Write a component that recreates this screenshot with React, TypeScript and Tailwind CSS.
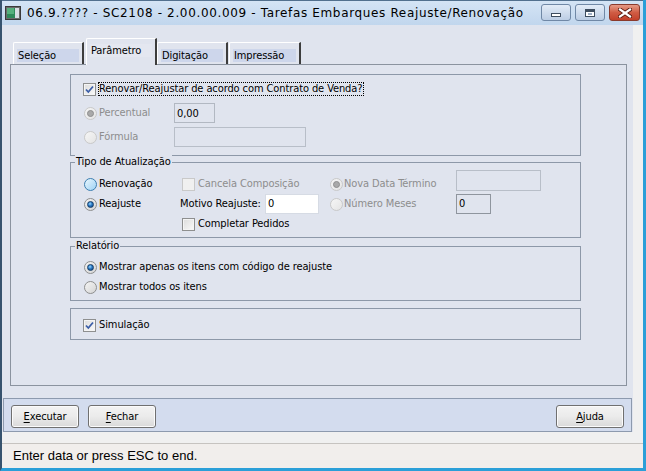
import clsx from 'clsx';

const disabledText = 'text-[#8d8d8d]';

function Radio({ checked = false, disabled = false, hot = false }: { checked?: boolean; disabled?: boolean; hot?: boolean }) {
  return (
    <span
      className={clsx(
        'inline-flex w-[13px] h-[13px] shrink-0 items-center justify-center rounded-full border',
        disabled
          ? 'border-[#c9c9c9] bg-linear-to-br from-[#f6f6f6] to-[#e4e4e4]'
          : hot
            ? 'border-[#3c7fb1] bg-linear-to-br from-[#e8f6fd] to-[#9fd3f4]'
            : 'border-[#8e8f8f] bg-linear-to-br from-[#f4f4f4] to-[#d5d5d5]'
      )}
    >
      {checked && (
        <span
          className={clsx(
            'w-[7px] h-[7px] rounded-full',
            disabled
              ? 'bg-[#a9a9a9] border border-[#8e8e8e]'
              : 'bg-[radial-gradient(circle_at_40%_35%,#9ad9ff_0%,#2a79c4_45%,#0d3f7a_100%)] border border-[#163e6a]'
          )}
        />
      )}
    </span>
  );
}

function Check({ checked = false, disabled = false }: { checked?: boolean; disabled?: boolean }) {
  return (
    <span
      className={clsx(
        'inline-flex w-[13px] h-[13px] shrink-0 items-center justify-center border',
        disabled
          ? 'border-[#c9c9c9] bg-[#f0f0f0]'
          : 'border-[#8e8f8f] bg-linear-to-br from-[#dcdcdc] to-[#fafafa] shadow-[inset_0_0_0_1px_#f4f4f4]'
      )}
    >
      {checked && (
        <svg width="9" height="9" viewBox="0 0 9 9">
          <path d="M1 4.5 L3.3 7 L8 1.5" fill="none" stroke="#3b5ea8" strokeWidth="1.8" />
        </svg>
      )}
    </span>
  );
}

function Field({ value = '', className }: { value?: string; className: string }) {
  return (
    <div className={clsx('flex items-center pl-[2px] border leading-none', className)}>{value}</div>
  );
}

function Group({ title, className, children }: { title?: string; className?: string; children: React.ReactNode }) {
  return (
    <div className={clsx('relative w-[511px] border border-[#8d98a8]', className)}>
      {title && (
        <span className="absolute left-[4px] -top-[8px] px-[1px] bg-[#e0e4ee] leading-[14px]">{title}</span>
      )}
      {children}
    </div>
  );
}

function Tab({ label, active = false, className }: { label: string; active?: boolean; className?: string }) {
  return (
    <div
      className={clsx(
        'w-[71px] border-t border-l border-t-white border-l-white border-r-2 border-r-[#3d3d3d] bg-[#e0e4ee] rounded-tl-[2px]',
        active ? 'relative z-10 h-[27px] -mb-[1px] pt-[5px]' : 'h-[22px] pt-[6px]',
        className
      )}
    >
      <div
        className={clsx(
          'mx-[3px] h-[13px] leading-[13px] pl-[1px]',
          active ? 'bg-[#e4e7f0]' : 'bg-[#cdd6eb]'
        )}
      >
        {label}
      </div>
    </div>
  );
}

function Btn({ k, rest, className }: { k: string; rest: string; className?: string }) {
  return (
    <button
      className={clsx(
        'w-[68px] h-[23px] rounded-[3px] border border-[#707070] bg-linear-to-b from-[#f3f3f3] via-[#ebebeb] to-[#d9d9d9] shadow-[inset_0_0_0_1px_#fbfbfb] text-black leading-none',
        className
      )}
    >
      <span className="underline underline-offset-2">{k}</span>
      {rest}
    </button>
  );
}

export default function App() {
  return (
    <div className="w-[646px] h-[471px] flex flex-col bg-[#e0e4ee] border-l-2 border-r-[3px] border-b-[3px] border-l-[#37536e] border-r-[#2b9fd8] border-b-[#2b9fd8] text-[11px] tracking-[-0.1px] text-black font-['DejaVu_Sans_Condensed','DejaVu_Sans',sans-serif] overflow-hidden">
      {/* Title bar */}
      <div className="h-[25px] shrink-0 flex items-center bg-linear-to-b from-[#d4e4f5] to-[#c1d6ed] border-t border-t-[#52708e]">
        <svg width="16" height="14" viewBox="0 0 16 14" className="ml-[3px]">
          <rect x="0.5" y="0.5" width="15" height="13" fill="#6b6b6b" stroke="#3a3a3a" />
          <rect x="2" y="2" width="12" height="10" fill="#2f8a5a" />
          <rect x="2" y="2" width="7" height="6" fill="#55b07c" />
          <rect x="10" y="2" width="4" height="10" fill="#d8dde3" />
        </svg>
        <span className="ml-[6px] text-[12px] tracking-[0.65px] font-['DejaVu_Sans',sans-serif]">06.9.???? - SC2108 - 2.00.00.009 - Tarefas Embarques Reajuste/Renovação</span>
        <div className="ml-auto mr-[3px] flex items-start gap-[4px] self-start mt-[3px]">
          <div className="w-[30px] h-[17px] rounded-[3px] border border-[#7088a6] bg-linear-to-b from-[#e3ecf7] to-[#bccde4] flex items-end justify-center pb-[3px]">
            <span className="w-[10px] h-[4px] bg-white border border-[#3e4d5f]" />
          </div>
          <div className="w-[30px] h-[17px] rounded-[3px] border border-[#7088a6] bg-linear-to-b from-[#e3ecf7] to-[#bccde4] flex items-center justify-center">
            <span className="w-[10px] h-[8px] border border-[#3e4d5f] bg-white shadow-[inset_0_2px_0_#3e4d5f]">
              <span className="block m-[2px] mt-[3px] h-[2px] bg-[#9fb0c6]" />
            </span>
          </div>
          <div className="w-[31px] h-[17px] rounded-[3px] border border-[#8a3a2c] bg-linear-to-b from-[#e59a86] via-[#d05c44] to-[#c2402a] flex items-center justify-center">
            <svg width="14" height="10" viewBox="0 0 14 10">
              <path d="M2 1.5 L12 8.5 M12 1.5 L2 8.5" stroke="#5a1a10" strokeWidth="4" strokeLinecap="square" />
              <path d="M2 1.5 L12 8.5 M12 1.5 L2 8.5" stroke="#ffffff" strokeWidth="2.2" strokeLinecap="square" />
            </svg>
          </div>
        </div>
      </div>

      {/* Main */}
      <div className="h-[407px] shrink-0 flex">
        <div className="flex-1 flex flex-col">
          {/* Tabs */}
          <div className="h-[39px] flex items-end pl-[11px]">
            <Tab label="Seleção" />
            <Tab label="Parâmetro" active className="ml-[2px]" />
            <Tab label="Digitação" />
            <Tab label="Impressão" className="ml-[1px] w-[72px]" />
          </div>

          {/* Panel */}
          <div className="ml-[8px] w-[617px] h-[322px] border border-[#8b939f] pt-[9px] pl-[59px]">
            <Group className="pt-[4px] pb-[8px] pl-[12px]">
              <div className="h-[20px] flex items-center">
                <Check checked />
                <span className="ml-[2px] border border-dotted border-black pr-[1px] leading-[12px]">
                  Renovar/Reajustar de acordo com Contrato de Venda?
                </span>
              </div>
              <div className="mt-[4px] h-[20px] flex items-center pl-[1px]">
                <div className="w-[90px] flex items-center">
                  <Radio checked disabled />
                  <span className={clsx('ml-[2px]', disabledText)}>Percentual</span>
                </div>
                <Field value="0,00" className="w-[41px] h-[20px] border-[#b2b8c2]" />
              </div>
              <div className="mt-[4px] h-[20px] flex items-center pl-[1px]">
                <div className="w-[90px] flex items-center">
                  <Radio disabled />
                  <span className={clsx('ml-[2px]', disabledText)}>Fórmula</span>
                </div>
                <Field className="w-[132px] h-[20px] border-[#b8bec8]" />
              </div>
            </Group>

            <Group title="Tipo de Atualização" className="mt-[6px] pt-[11px] pb-[3px] pl-[13px]">
              <div className="grid grid-cols-[96px_150px_126px_1fr] grid-rows-[20px_20px_20px] items-center">
                <div className="flex items-center">
                  <Radio hot />
                  <span className="ml-[2px]">Renovação</span>
                </div>
                <div className="flex items-center pl-[2px]">
                  <Check disabled />
                  <span className={clsx('ml-[3px]', disabledText)}>Cancela Composição</span>
                </div>
                <div className="flex items-center">
                  <Radio checked disabled />
                  <span className={clsx('ml-[1px]', disabledText)}>Nova Data Término</span>
                </div>
                <Field className="w-[85px] h-[21px] -mt-[7px] border-[#b8bec8]" />

                <div className="flex items-center">
                  <Radio checked />
                  <span className="ml-[2px]">Reajuste</span>
                </div>
                <div className="flex items-center">
                  <span className="w-[85px] whitespace-nowrap">Motivo Reajuste:</span>
                  <Field value="0" className="w-[54px] h-[20px] -mt-[1px] bg-white border-[#d6dbe4]" />
                </div>
                <div className="flex items-center">
                  <Radio disabled />
                  <span className={clsx('ml-[1px]', disabledText)}>Número Meses</span>
                </div>
                <Field value="0" className="w-[35px] h-[20px] -mt-[1px] border-[#8f959e]" />

                <div />
                <div className="flex items-center pl-[2px]">
                  <Check />
                  <span className="ml-[3px]">Completar Pedidos</span>
                </div>
                <div />
                <div />
              </div>
            </Group>

            <Group title="Relatório" className="mt-[8px] pt-[10px] pb-[3px] pl-[13px]">
              <div className="h-[20px] flex items-center">
                <Radio checked />
                <span className="ml-[2px]">Mostrar apenas os itens com código de reajuste</span>
              </div>
              <div className="h-[20px] flex items-center">
                <Radio />
                <span className="ml-[2px]">Mostrar todos os itens</span>
              </div>
            </Group>

            <Group className="mt-[7px] pt-[6px] pb-[4px] pl-[12px]">
              <div className="h-[20px] flex items-center">
                <Check checked />
                <span className="ml-[3px]">Simulação</span>
              </div>
            </Group>
          </div>

          {/* Button bar */}
          <div className="mt-[12px] mx-[1px] h-[34px] border border-[#8d9aae] bg-[#d3dcee] pt-[6px] px-[7px] flex items-start">
            <Btn k="E" rest="xecutar" />
            <Btn k="F" rest="echar" className="ml-[9px]" />
            <Btn k="A" rest="juda" className="ml-auto" />
          </div>
        </div>
        <div className="w-[10px] bg-[#f0f0f0]" />
      </div>

      <div className="h-[11px] shrink-0 bg-[#f0f0f0]" />

      {/* Status bar */}
      <div className="flex-1 border-t border-[#c6c3c0] bg-[#f1eeec] flex items-center pl-[11px] text-[13px] tracking-normal font-['Liberation_Sans',sans-serif]">
        Enter data or press ESC to end.
      </div>
    </div>
  );
}
